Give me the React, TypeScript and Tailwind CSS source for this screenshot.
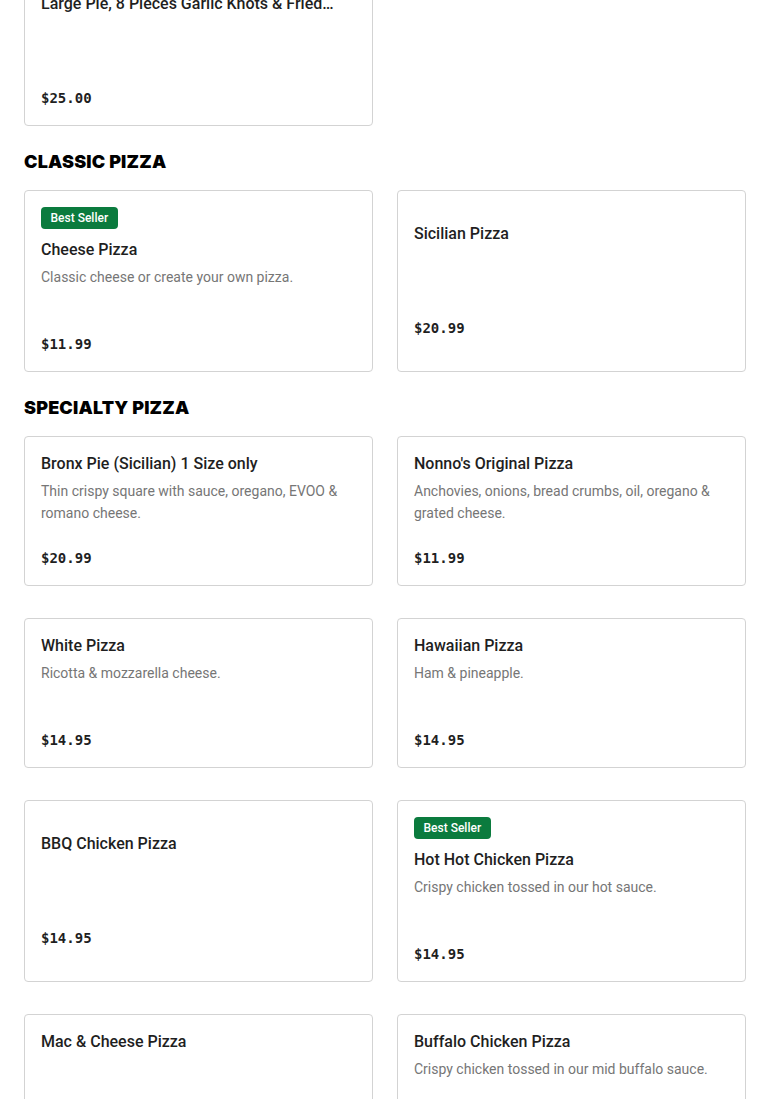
type Item = {
  name: string;
  desc?: string;
  price: string;
  best?: boolean;
};

const SECTIONS: { title?: string; items: Item[] }[] = [
  {
    items: [{ name: "Large Pie, 8 Pieces Garlic Knots & Fried…", price: "$25.00" }],
  },
  {
    title: "Classic Pizza",
    items: [
      { name: "Cheese Pizza", desc: "Classic cheese or create your own pizza.", price: "$11.99", best: true },
      { name: "Sicilian Pizza", price: "$20.99" },
    ],
  },
  {
    title: "Specialty Pizza",
    items: [
      { name: "Bronx Pie (Sicilian) 1 Size only", desc: "Thin crispy square with sauce, oregano, EVOO & romano cheese.", price: "$20.99" },
      { name: "Nonno's Original Pizza", desc: "Anchovies, onions, bread crumbs, oil, oregano & grated cheese.", price: "$11.99" },
      { name: "White Pizza", desc: "Ricotta & mozzarella cheese.", price: "$14.95" },
      { name: "Hawaiian Pizza", desc: "Ham & pineapple.", price: "$14.95" },
      { name: "BBQ Chicken Pizza", price: "$14.95" },
      { name: "Hot Hot Chicken Pizza", desc: "Crispy chicken tossed in our hot sauce.", price: "$14.95", best: true },
      { name: "Mac & Cheese Pizza", price: "$14.95" },
      { name: "Buffalo Chicken Pizza", desc: "Crispy chicken tossed in our mid buffalo sauce.", price: "$14.95" },
    ],
  },
];

function Card({ item }: { item: Item }) {
  return (
    <div className="flex flex-col justify-center rounded-[4px] border border-[#d3d3d3] bg-white p-4">
      {item.best && (
        <span className="mb-[10px] self-start rounded-[4px] bg-[#0b7b3e] px-[9.5px] text-[12px] leading-[22px] font-medium text-white">
          Best Seller
        </span>
      )}
      <h3 className="truncate text-[16px] leading-[22px] font-medium text-[#1f1f1f]">{item.name}</h3>
      <p className="mt-[5px] min-h-[44px] text-[14px] leading-[22px] text-[#767676]">{item.desc}</p>
      <p
        className="mt-[23px] text-[14px] leading-[22px] font-bold text-[#1f1f1f]"
        style={{ fontFamily: '"DejaVu Sans Mono", "Liberation Mono", monospace' }}
      >
        {item.price}
      </p>
    </div>
  );
}

export default function App() {
  return (
    <div
      className="min-h-screen overflow-hidden bg-white px-6"
      style={{ fontFamily: 'Roboto, "Noto Sans", Arial, sans-serif' }}
    >
      <div className="mt-[-24px] flex flex-col">
        {SECTIONS.map((s, i) => (
          <section key={i}>
            {s.title && (
              <h2
                className="mt-6 mb-4 text-[18px] leading-6 font-black tracking-[0.01em] text-black uppercase"
                style={{ fontFamily: 'Inter, Arial, sans-serif' }}
              >
                {s.title}
              </h2>
            )}
            <div className="grid grid-cols-2 gap-x-6 gap-y-8">
              {s.items.map((it) => (
                <Card key={it.name} item={it} />
              ))}
            </div>
          </section>
        ))}
      </div>
    </div>
  );
}
